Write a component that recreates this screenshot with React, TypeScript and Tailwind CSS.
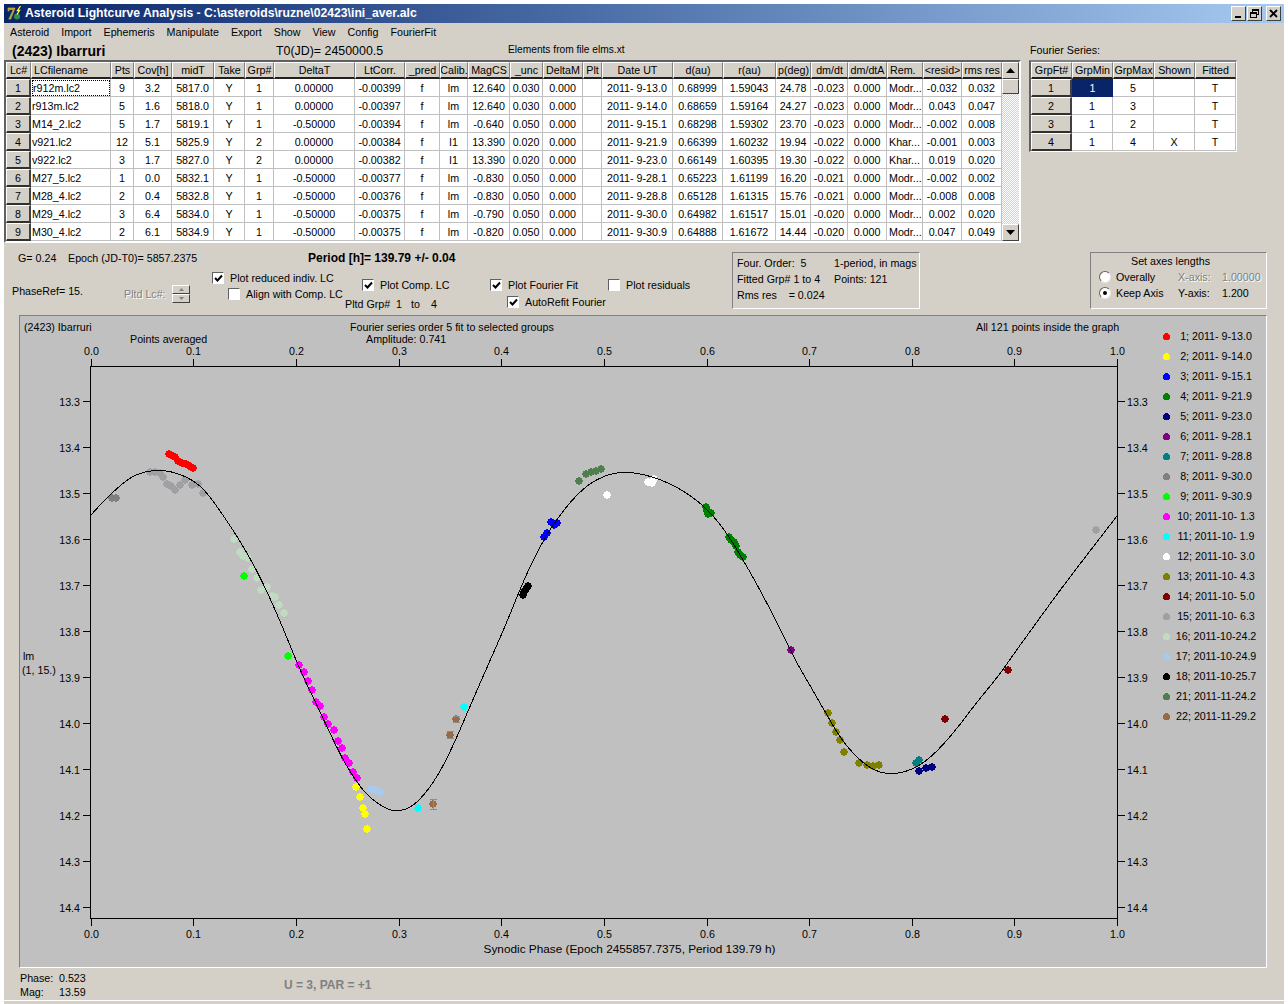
import React from "react";

const FONT = "font-['Liberation_Sans',Arial,sans-serif]";
const COLS = "grid grid-cols-[25px_80px_23px_38px_42px_31px_29px_81px_50px_35px_28px_42px_33px_40px_19px_71px_50px_53px_35px_37px_39px_36px_39px_40px]";
const FCOLS = "grid grid-cols-[41px_41px_41px_41px_41px]";
const HEAD = "flex items-center justify-center overflow-hidden whitespace-nowrap bg-[#d4d0c8] h-[17px] pt-px border-t border-l border-r border-b-2 border-t-white border-l-white border-r-[#808080] border-b-[#202020]";
const ROWH = "flex items-center justify-center bg-[#d4d0c8] h-[18px] pt-px border-t border-l border-r-2 border-b-2 border-t-white border-l-white border-r-[#404040] border-b-[#303030]";
const CELL = "flex items-center justify-center overflow-hidden whitespace-nowrap bg-white h-[18px] pt-px border-r border-b border-[#c0c0c0]";

const headers = ["Lc#", "LCfilename", "Pts", "Cov[h]", "midT", "Take", "Grp#", "DeltaT", "LtCorr.", "_pred", "Calib.", "MagCS", "_unc", "DeltaM", "Plt", "Date UT", "d(au)", "r(au)", "p(deg)", "dm/dt", "dm/dtA", "Rem.", "<resid>", "rms res"];

const rows: string[][] = [
  ["r912m.lc2", "9", "3.2", "5817.0", "Y", "1", "0.00000", "-0.00399", "f", "lm", "12.640", "0.030", "0.000", "", "2011- 9-13.0", "0.68999", "1.59043", "24.78", "-0.023", "0.000", "Modr...", "-0.032", "0.032"],
  ["r913m.lc2", "5", "1.6", "5818.0", "Y", "1", "0.00000", "-0.00397", "f", "lm", "12.640", "0.030", "0.000", "", "2011- 9-14.0", "0.68659", "1.59164", "24.27", "-0.023", "0.000", "Modr...", "0.043", "0.047"],
  ["M14_2.lc2", "5", "1.7", "5819.1", "Y", "1", "-0.50000", "-0.00394", "f", "lm", "-0.640", "0.050", "0.000", "", "2011- 9-15.1", "0.68298", "1.59302", "23.70", "-0.023", "0.000", "Modr...", "-0.002", "0.008"],
  ["v921.lc2", "12", "5.1", "5825.9", "Y", "2", "0.00000", "-0.00384", "f", "I1", "13.390", "0.020", "0.000", "", "2011- 9-21.9", "0.66399", "1.60232", "19.94", "-0.022", "0.000", "Khar...", "-0.001", "0.003"],
  ["v922.lc2", "3", "1.7", "5827.0", "Y", "2", "0.00000", "-0.00382", "f", "I1", "13.390", "0.020", "0.000", "", "2011- 9-23.0", "0.66149", "1.60395", "19.30", "-0.022", "0.000", "Khar...", "0.019", "0.020"],
  ["M27_5.lc2", "1", "0.0", "5832.1", "Y", "1", "-0.50000", "-0.00377", "f", "lm", "-0.830", "0.050", "0.000", "", "2011- 9-28.1", "0.65223", "1.61199", "16.20", "-0.021", "0.000", "Modr...", "-0.002", "0.002"],
  ["M28_4.lc2", "2", "0.4", "5832.8", "Y", "1", "-0.50000", "-0.00376", "f", "lm", "-0.830", "0.050", "0.000", "", "2011- 9-28.8", "0.65128", "1.61315", "15.76", "-0.021", "0.000", "Modr...", "-0.008", "0.008"],
  ["M29_4.lc2", "3", "6.4", "5834.0", "Y", "1", "-0.50000", "-0.00375", "f", "lm", "-0.790", "0.050", "0.000", "", "2011- 9-30.0", "0.64982", "1.61517", "15.01", "-0.020", "0.000", "Modr...", "0.002", "0.020"],
  ["M30_4.lc2", "2", "6.1", "5834.9", "Y", "1", "-0.50000", "-0.00375", "f", "lm", "-0.820", "0.050", "0.000", "", "2011- 9-30.9", "0.64888", "1.61672", "14.44", "-0.020", "0.000", "Modr...", "0.047", "0.049"],
];

const fourier = [
  ["1", "1", "5", "", "T"],
  ["2", "1", "3", "", "T"],
  ["3", "1", "2", "", "T"],
  ["4", "1", "4", "X", "T"],
];

const legend: [string, string][] = [
  ["1; 2011- 9-13.0", "#ff0000"],
  ["2; 2011- 9-14.0", "#ffff00"],
  ["3; 2011- 9-15.1", "#0000ff"],
  ["4; 2011- 9-21.9", "#008000"],
  ["5; 2011- 9-23.0", "#000080"],
  ["6; 2011- 9-28.1", "#800080"],
  ["7; 2011- 9-28.8", "#008080"],
  ["8; 2011- 9-30.0", "#808080"],
  ["9; 2011- 9-30.9", "#00ff00"],
  ["10; 2011-10- 1.3", "#ff00ff"],
  ["11; 2011-10- 1.9", "#00ffff"],
  ["12; 2011-10- 3.0", "#ffffff"],
  ["13; 2011-10- 4.3", "#808000"],
  ["14; 2011-10- 5.0", "#800000"],
  ["15; 2011-10- 6.3", "#a0a0a4"],
  ["16; 2011-10-24.2", "#c0dcc0"],
  ["17; 2011-10-24.9", "#a6caf0"],
  ["18; 2011-10-25.7", "#000000"],
  ["21; 2011-11-24.2", "#4f7f4f"],
  ["22; 2011-11-29.2", "#966b45"],
];

const series: [string, number[][]][] = [
  ["#a0a0a4", [[150, 472], [155, 472], [160, 473], [163, 477], [167, 484], [171, 486], [175, 490], [180, 485], [185, 480], [192, 485], [198, 484], [203, 493], [1096, 530]]],
  ["#808080", [[112, 498], [116, 498]]],
  ["#c0dcc0", [[234, 539], [240, 552], [243, 556], [248, 558], [252, 569], [257, 578], [261, 590], [267, 587], [272, 596], [275, 597], [279, 605], [284, 613]]],
  ["#ff0000", [[169, 454], [173, 456], [175, 457], [178, 461], [182, 463], [186, 464], [188, 465], [191, 467], [193, 468]]],
  ["#00ff00", [[244, 576], [288, 656]]],
  ["#ffff00", [[356, 787], [360, 797], [363, 808], [365, 814], [367, 829]]],
  ["#a6caf0", [[371, 789], [375, 790], [380, 792]]],
  ["#ff00ff", [[299, 665], [304, 672], [308, 681], [312, 690], [316, 702], [320, 706], [324, 717], [328, 724], [334, 730], [338, 741], [342, 748], [345, 758], [349, 763], [353, 772], [357, 778]]],
  ["#00ffff", [[418, 808], [464, 707]]],
  ["#966b45", [[433, 804], [450, 735], [456, 719]]],
  ["#000000", [[523, 595], [524, 592], [526, 589], [528, 586]]],
  ["#0000ff", [[544, 537], [547, 533], [551, 522], [554, 525], [557, 523]]],
  ["#4f7f4f", [[579, 481], [586, 474], [591, 472], [596, 471], [601, 469]]],
  ["#ffffff", [[607, 495], [648, 482], [652, 483], [654, 479]]],
  ["#008000", [[706, 507], [707, 511], [708, 514], [711, 513], [729, 537], [731, 540], [734, 542], [736, 546], [738, 552], [740, 555], [743, 557]]],
  ["#800080", [[791, 650]]],
  ["#808000", [[828, 713], [832, 723], [836, 732], [840, 740], [844, 752], [859, 763], [867, 765], [873, 766], [879, 765]]],
  ["#008080", [[916, 763], [919, 760]]],
  ["#000080", [[919, 771], [926, 768], [932, 767]]],
  ["#800000", [[945, 719], [1008, 670]]],
];

const curvePts: number[][] = [
  [91, 515], [100, 505], [113, 492], [127, 480], [140, 473], [157, 470], [173, 472], [193, 480], [207, 493], [220, 511], [233, 530], [247, 553], [260, 577], [273, 605], [288, 640], [300, 670], [313, 697], [330, 733], [343, 760], [360, 787], [373, 800], [387, 809], [397, 811], [410, 808], [423, 796], [437, 777], [450, 752], [463, 723], [477, 690], [489, 663], [512, 610], [525, 577], [542, 543], [555, 522], [572, 500], [590, 483], [610, 474], [628, 472], [650, 476], [673, 485], [697, 500], [717, 520], [733, 543], [747, 567], [759, 588], [786, 640], [795, 660], [807, 680], [817, 698], [830, 720], [843, 742], [860, 760], [875, 771], [892, 774], [908, 771], [925, 762], [943, 745], [962, 722], [980, 698], [997, 678], [1013, 655], [1024, 640], [1060, 590], [1090, 551], [1117, 516],
];

function smooth(pts: number[][]) {
  const raw: number[][] = [];
  for (let i = 0; i < pts.length - 1; i++) {
    const p0 = pts[Math.max(0, i - 1)], p1 = pts[i], p2 = pts[i + 1], p3 = pts[Math.min(pts.length - 1, i + 2)];
    for (let s = 0; s < 6; s++) {
      const t = s / 6;
      const f = (a: number, b: number, c: number, d: number) =>
        0.5 * (2 * b + (c - a) * t + (2 * a - 5 * b + 4 * c - d) * t * t + (3 * b - a - 3 * c + d) * t * t * t);
      raw.push([f(p0[0], p1[0], p2[0], p3[0]), f(p0[1], p1[1], p2[1], p3[1])]);
    }
  }
  raw.push(pts[pts.length - 1]);
  const w = 4;
  const out = raw.map((p, i) => {
    if (i < w || i >= raw.length - w) return p;
    let sx = 0, sy = 0;
    for (let k = -w; k <= w; k++) {
      sx += raw[i + k][0];
      sy += raw[i + k][1];
    }
    return [sx / (2 * w + 1), sy / (2 * w + 1)];
  });
  return out.map((p) => `${p[0].toFixed(1)},${p[1].toFixed(1)}`).join(" ");
}

const xTicks = [0, 1, 2, 3, 4, 5, 6, 7, 8, 9, 10].map((k) => ({ x: Math.round(90.6 + 102.65 * k) + 0.5, l: (k / 10).toFixed(1) }));
const yTicks = [0, 1, 2, 3, 4, 5, 6, 7, 8, 9, 10, 11].map((k) => ({ y: 401 + 46 * k + 0.5, l: (13.3 + k / 10).toFixed(1) }));

function Check({ on }: { on?: boolean }) {
  return (
    <span className="flex items-center justify-center w-[12px] h-[12px] shrink-0 bg-white border border-t-[#606060] border-l-[#606060] border-b-white border-r-white">
      {on && (
        <svg width="9" height="9" viewBox="0 0 9 9">
          <path d="M1 4 L3.5 6.5 L8 1.5" fill="none" stroke="#000" strokeWidth="2" />
        </svg>
      )}
    </span>
  );
}

function Radio({ on }: { on?: boolean }) {
  return (
    <span className="flex items-center justify-center w-[12px] h-[12px] shrink-0 rounded-full bg-white border border-t-[#606060] border-l-[#606060] border-b-[#e8e8e8] border-r-[#e8e8e8]">
      {on && <span className="block w-[4px] h-[4px] rounded-full bg-black" />}
    </span>
  );
}

function CheckRow({ on, label, className }: { on?: boolean; label: string; className?: string }) {
  return (
    <div className={`flex items-center gap-[6px] h-[16px] whitespace-nowrap ${className ?? ""}`}>
      <Check on={on} />
      <span>{label}</span>
    </div>
  );
}

function TitleBtn({ children }: { children: React.ReactNode }) {
  return (
    <span className="flex items-center justify-center w-[15px] h-[15px] bg-[#d4d0c8] border border-t-white border-l-white border-r-[#404040] border-b-[#404040]">
      {children}
    </span>
  );
}

export default function App() {
  return (
    <div className={`${FONT} w-[1288px] h-[1004px] bg-white pt-[4px] pl-[4px] text-[10.7px] leading-none text-black overflow-hidden`}>
      <div className="w-[1280px] h-[1000px] bg-[#d4d0c8] flex flex-col">
        {/* title bar */}
        <div className="h-[19px] shrink-0 flex items-center bg-gradient-to-r from-[#0a246a] to-[#a6caf0] pl-[2px] pr-[3px]">
          <svg width="17" height="17" viewBox="0 0 17 17" className="shrink-0">
            <rect width="17" height="17" fill="#0a246a" />
            <text x="1" y="14" fontFamily="'Liberation Serif',serif" fontWeight="700" fontSize="16" fill="#a89a28" stroke="#e0d040" strokeWidth="0.4">7</text>
            <circle cx="11" cy="11.5" r="3" fill="#2f8f4f" />
            <path d="M14.5 1 L11.5 5.5 L13.5 5.5 L11 9.5" fill="none" stroke="#ffff40" strokeWidth="1.3" />
          </svg>
          <span className="ml-[2px] text-white font-bold text-[12.2px] whitespace-nowrap">Asteroid Lightcurve Analysis - C:\asteroids\ruzne\02423\ini_aver.alc</span>
          <div className="ml-auto flex items-center gap-[1px]">
            <TitleBtn>
              <svg width="9" height="9" viewBox="0 0 9 9"><rect x="1" y="7" width="6" height="2" fill="#000" /></svg>
            </TitleBtn>
            <TitleBtn>
              <svg width="9" height="9" viewBox="0 0 9 9" shapeRendering="crispEdges">
                <path d="M2.5 2.5 V0.5 H8.5 V5.5 H6.5 M0.5 3.5 H6.5 V8.5 H0.5 Z M2 1 H8 M1 4 H6" fill="none" stroke="#000" />
              </svg>
            </TitleBtn>
            <span className="w-[2px]" />
            <TitleBtn>
              <svg width="9" height="9" viewBox="0 0 9 9"><path d="M1 1 L8 8 M8 1 L1 8" stroke="#000" strokeWidth="1.8" /></svg>
            </TitleBtn>
          </div>
        </div>

        {/* menu */}
        <div className="h-[19px] shrink-0 flex items-center gap-[12px] pl-[6px] whitespace-nowrap">
          {["Asteroid", "Import", "Ephemeris", "Manipulate", "Export", "Show", "View", "Config", "FourierFit"].map((m) => (
            <span key={m}>{m}</span>
          ))}
        </div>

        {/* name row */}
        <div className="h-[18px] shrink-0 flex items-center whitespace-nowrap">
          <span className="w-[272px] pl-[8px] font-bold text-[14px]">(2423) Ibarruri</span>
          <span className="w-[232px] text-[12.4px]">T0(JD)= 2450000.5</span>
          <span className="w-[522px] text-[10.2px] -mt-px">Elements from file elms.xt</span>
          <span className="-mt-px">Fourier Series:</span>
        </div>

        {/* tables */}
        <div className="h-[183px] shrink-0 flex items-start">
          <div className="w-[1017px] h-[183px] flex border-2 border-t-[#606060] border-l-[#606060] border-b-white border-r-white">
            <div className="w-[996px]">
              <div className={COLS}>
                {headers.map((h, i) => (
                  <div key={h} className={`${HEAD} ${i === 1 || i === 21 ? "justify-start pl-[2px]" : ""}`}>{h}</div>
                ))}
              </div>
              {rows.map((r, i) => (
                <div key={i} className={COLS}>
                  <div className={ROWH}>{i + 1}</div>
                  {r.map((c, j) =>
                    j === 0 ? (
                      <div key={j} className={`${CELL} justify-start pl-[1px]`}>
                        {i === 0 ? (
                          <span className="flex items-center w-full h-full border border-dotted border-black">{c}</span>
                        ) : (
                          c
                        )}
                      </div>
                    ) : (
                      <div key={j} className={`${CELL} ${j === 20 ? "justify-start pl-[2px]" : ""}`}>{c}</div>
                    )
                  )}
                </div>
              ))}
            </div>
            <div className="w-[17px] h-[179px] flex flex-col bg-[repeating-conic-gradient(#d4d0c8_0_25%,#ffffff_0_50%)] bg-[length:2px_2px]">
              <div className="h-[17px] flex items-center justify-center bg-[#d4d0c8] border border-t-white border-l-white border-r-[#404040] border-b-[#404040]">
                <svg width="9" height="5" viewBox="0 0 9 5"><path d="M4.5 0 L9 5 H0 Z" fill="#000" /></svg>
              </div>
              <div className="h-[15px] bg-[#d4d0c8] border border-t-white border-l-white border-r-[#404040] border-b-[#404040]" />
              <div className="mt-auto h-[17px] flex items-center justify-center bg-[#d4d0c8] border border-t-white border-l-white border-r-[#404040] border-b-[#404040]">
                <svg width="9" height="5" viewBox="0 0 9 5"><path d="M0 0 H9 L4.5 5 Z" fill="#000" /></svg>
              </div>
            </div>
          </div>

          <div className="ml-[8px] w-[208px] h-[92px] border-t-2 border-l-2 border-b border-r border-t-[#808080] border-l-[#606060] border-b-white border-r-white">
            <div className={FCOLS}>
              {["GrpFt#", "GrpMin", "GrpMax", "Shown", "Fitted"].map((h) => (
                <div key={h} className={HEAD}>{h}</div>
              ))}
            </div>
            {fourier.map((r, i) => (
              <div key={i} className={FCOLS}>
                <div className={ROWH}>{r[0]}</div>
                {r.slice(1).map((c, j) => (
                  <div key={j} className={i === 0 && j === 0 ? "flex items-center justify-center h-[18px] pt-px bg-[#0a246a] text-white" : CELL}>{c}</div>
                ))}
              </div>
            ))}
          </div>
        </div>

        {/* controls */}
        <div className="h-[72px] shrink-0 flex items-start whitespace-nowrap">
          <div className="w-[728px]">
            <div className="h-[30px] flex items-center">
              <span className="w-[64px] pl-[14px]">G= 0.24</span>
              <span className="w-[240px]">Epoch (JD-T0)= 5857.2375</span>
              <span className="font-bold text-[12px]">Period [h]= 139.79 +/- 0.04</span>
            </div>
            <div className="h-[42px] flex">
              <div className="w-[120px] pl-[8px] pt-[13px] h-[30px]">PhaseRef= 15.</div>
              <div className="w-[88px] flex items-center h-[42px]">
                <span className="w-[48px] text-[#808080] [text-shadow:1px_1px_0_#fff]">Pltd Lc#:</span>
                <span className="flex flex-col w-[18px] h-[18px]">
                  {[0, 1].map((k) => (
                    <span key={k} className="flex items-center justify-center h-[9px] bg-[#d4d0c8] border border-t-white border-l-white border-r-[#404040] border-b-[#404040]">
                      <svg width="5" height="3" viewBox="0 0 5 3">
                        <path d={k === 0 ? "M2.5 0 L5 3 H0 Z" : "M0 0 H5 L2.5 3 Z"} fill="#808080" />
                      </svg>
                    </span>
                  ))}
                </span>
              </div>
              <div className="w-[133px] -mt-[3px]">
                <CheckRow on label="Plot reduced indiv. LC" />
                <CheckRow label="Align with Comp. LC" className="ml-[16px]" />
              </div>
              <div className="w-[145px]">
                <CheckRow on label="Plot Comp. LC" className="ml-[17px] mt-[4px]" />
                <div className="mt-[3px] flex items-center h-[16px]">
                  <span className="w-[51px]">Pltd Grp#</span>
                  <span className="w-[15px]">1</span>
                  <span className="w-[20px]">to</span>
                  <span>4</span>
                </div>
              </div>
              <div className="w-[118px]">
                <CheckRow on label="Plot Fourier Fit" className="mt-[4px]" />
                <CheckRow on label="AutoRefit Fourier" className="ml-[17px] mt-[1px]" />
              </div>
              <div>
                <CheckRow label="Plot residuals" className="mt-[4px]" />
              </div>
            </div>
          </div>

          <div className="mt-[9px] w-[188px] h-[57px] border border-t-[#808080] border-l-[#808080] border-b-white border-r-white pl-[4px] pt-[2px]">
            <div className="grid grid-cols-[97px_1fr] auto-rows-[16px] items-center">
              <span>Four. Order:&nbsp; 5</span>
              <span>1-period, in mags</span>
              <span>Fitted Grp# 1 to 4</span>
              <span>Points: 121</span>
              <span>Rms res&nbsp;&nbsp;&nbsp; = 0.024</span>
              <span />
            </div>
          </div>

          <div className="mt-[9px] ml-[170px] w-[177px] h-[57px] border border-t-[#808080] border-l-[#808080] border-b-white border-r-white pl-[8px]">
            <div className="h-[16px] flex items-center pl-[32px]">Set axes lengths</div>
            <div className="h-[16px] flex items-center">
              <Radio />
              <span className="ml-[5px] w-[62px]">Overally</span>
              <span className="w-[44px] text-[#808080] [text-shadow:1px_1px_0_#fff]">X-axis:</span>
              <span className="text-[#808080] [text-shadow:1px_1px_0_#fff]">1.00000</span>
            </div>
            <div className="h-[16px] flex items-center">
              <Radio on />
              <span className="ml-[5px] w-[62px]">Keep Axis</span>
              <span className="w-[44px]">Y-axis:</span>
              <span>1.200</span>
            </div>
          </div>
        </div>

        {/* plot */}
        <div className="ml-[15px] w-[1248px] h-[653px] shrink-0 flex bg-[#c0c0c0] border border-t-[#808080] border-l-[#808080] border-b-white border-r-white">
          <svg width="1135" height="651" viewBox="20 316 1135 651" className="shrink-0 block" fontFamily="'Liberation Sans',Arial,sans-serif" fontSize="10.7" fill="#000">
            <text x="24" y="331">(2423) Ibarruri</text>
            <text x="130" y="343">Points averaged</text>
            <text x="350" y="331">Fourier series order 5 fit to selected groups</text>
            <text x="366" y="343">Amplitude: 0.741</text>
            <text x="976" y="331">All 121 points inside the graph</text>
            <text x="23" y="660">lm</text>
            <text x="22" y="674">(1, 15.)</text>
            <text x="629.5" y="953" textAnchor="middle" fontSize="11.8">Synodic Phase (Epoch 2455857.7375, Period 139.79 h)</text>

            {series.map(([c, pts]) =>
              pts.map(([x, y], i) => <circle key={c + i} cx={x} cy={y} r={3.6} fill={c} shapeRendering="crispEdges" />)
            )}
            <path d="M430 799.5 H437 M430 809.5 H437 M433.5 799 V810 M447 731.5 H454 M447 738.5 H454 M453 716.5 H460 M453 722.5 H460" stroke="#8c8c8c" fill="none" shapeRendering="crispEdges" />

            <polyline points={smooth(curvePts)} fill="none" stroke="#000" strokeWidth="1" shapeRendering="crispEdges" />

            <g stroke="#000" shapeRendering="crispEdges">
              <rect x="90.5" y="366.5" width="1027" height="552" fill="none" />
              {xTicks.map((t) => (
                <g key={t.l}>
                  <line x1={t.x} x2={t.x} y1={359} y2={366} />
                  <line x1={t.x} x2={t.x} y1={919} y2={926} />
                </g>
              ))}
              {yTicks.map((t) => (
                <g key={t.l}>
                  <line x1={83} x2={90} y1={t.y} y2={t.y} />
                  <line x1={1118} x2={1125} y1={t.y} y2={t.y} />
                </g>
              ))}
            </g>
            {xTicks.map((t) => (
              <g key={t.l}>
                <text x={t.x} y={355} textAnchor="middle">{t.l}</text>
                <text x={t.x} y={938} textAnchor="middle">{t.l}</text>
              </g>
            ))}
            {yTicks.map((t) => (
              <g key={t.l}>
                <text x={80} y={t.y + 4} textAnchor="end">{t.l}</text>
                <text x={1127} y={t.y + 4}>{t.l}</text>
              </g>
            ))}
          </svg>

          <div className="mt-[10px] flex flex-col">
            {legend.map(([t, c]) => (
              <div key={t} className="h-[20px] flex items-center whitespace-nowrap">
                <svg width="7" height="7" viewBox="0 0 7 7" className="ml-[8px] shrink-0">
                  <circle cx="3.5" cy="3.5" r="3.5" fill={c} shapeRendering="crispEdges" />
                </svg>
                <span className="ml-[5px] w-[82px] text-center">{t}</span>
              </div>
            ))}
          </div>
        </div>

        {/* footer */}
        <div className="h-[32px] shrink-0 flex items-start whitespace-nowrap">
          <div className="w-[280px] pl-[16px] pt-[3px]">
            <div className="h-[14px] flex items-center"><span className="w-[39px]">Phase:</span><span>0.523</span></div>
            <div className="h-[14px] flex items-center"><span className="w-[39px]">Mag:</span><span>13.59</span></div>
          </div>
          <span className="mt-[11px] font-bold text-[12px] text-[#808080]">U = 3, PAR = +1</span>
        </div>
        <div className="h-px shrink-0 bg-white" />
      </div>
    </div>
  );
}
